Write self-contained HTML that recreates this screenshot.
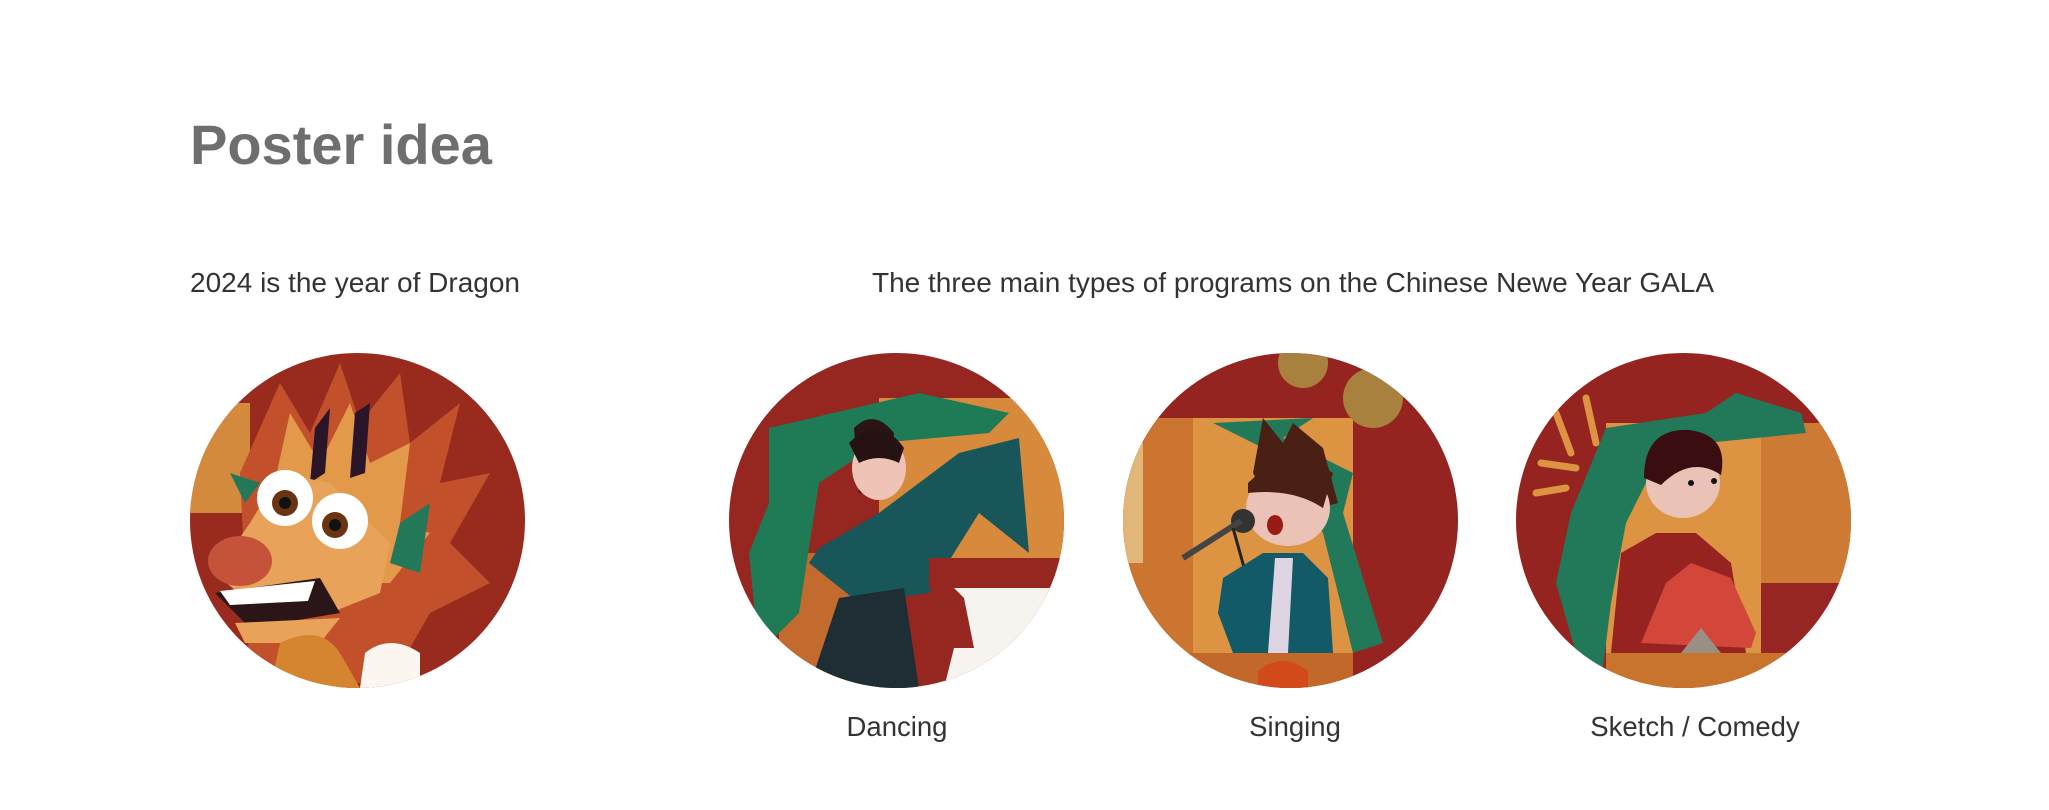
<!DOCTYPE html>
<html><head><meta charset="utf-8"><style>
body{margin:0;width:2049px;height:810px;background:#fff;position:relative;overflow:hidden;font-family:"Liberation Sans",Arial,sans-serif;}
.t{position:absolute;white-space:nowrap}
h1{position:absolute;left:190px;top:112px;margin:0;font-size:56px;font-weight:bold;color:#6e6e6e;}
.s{font-size:28px;color:#333;}
.c{position:absolute;top:353px;width:335px;height:335px;border-radius:50%;overflow:hidden}
.c svg{display:block}
.l{font-size:27.5px;color:#333;top:711px;transform:translateX(-50%)}
</style></head><body>
<h1>Poster idea</h1>
<div class="t s" style="left:190px;top:267px">2024 is the year of Dragon</div>
<div class="t s" style="left:872px;top:267px">The three main types of programs on the Chinese Newe Year GALA</div>

<div class="c" style="left:190px"><svg width="335" height="335" viewBox="0 0 335 335">
<rect width="335" height="335" fill="#982a1e"/>
<rect x="0" y="50" width="60" height="110" fill="#d48a3c"/>
<path d="M60 330 L50 120 L90 30 L120 80 L150 10 L170 70 L210 20 L220 90 L270 50 L250 130 L300 120 L260 190 L300 230 L240 260 L200 330Z" fill="#c1502b"/>
<path d="M80 150 L100 60 L130 110 L160 50 L180 110 L220 90 L210 170 L240 180 L200 230 L150 230Z" fill="#e29a4a"/>
<path d="M125 75 L140 55 L135 120 L120 130Z M165 60 L180 50 L175 120 L160 125Z" fill="#2a1628"/>
<path d="M60 170 L90 120 L140 130 L200 190 L190 240 L140 260 L60 250 L25 220Z" fill="#e8a259"/>
<path d="M70 130 L40 120 L55 150 Z M210 170 L240 150 L230 220 L200 210Z" fill="#24785a"/>
<circle cx="95" cy="145" r="28" fill="#fff"/><circle cx="150" cy="168" r="28" fill="#fff"/>
<circle cx="95" cy="150" r="13" fill="#6a3412"/><circle cx="145" cy="172" r="13" fill="#6a3412"/>
<circle cx="95" cy="150" r="6" fill="#111"/><circle cx="145" cy="172" r="6" fill="#111"/>
<ellipse cx="50" cy="208" rx="32" ry="25" fill="#c4533a"/>
<path d="M25 240 L130 225 L150 260 L60 275 Z" fill="#2a1616"/>
<path d="M30 238 L125 228 L118 248 L40 252Z" fill="#fff"/>
<path d="M45 270 L150 265 L130 290 L55 290Z" fill="#e8a259"/>
<path d="M90 290 Q130 270 150 300 L170 335 L80 335Z" fill="#d5842f"/>
<path d="M175 300 Q200 280 230 300 L230 335 L170 335Z" fill="#fbf6f0"/>
</svg></div>

<div class="c" style="left:729px"><svg width="335" height="335" viewBox="0 0 335 335">
<rect width="335" height="335" fill="#962620"/>
<rect x="150" y="45" width="185" height="160" fill="#d88a3c"/>
<rect x="50" y="200" width="100" height="135" fill="#c36a2e"/>
<path d="M40 75 L190 40 L280 60 L260 80 L150 90 L90 130 L70 260 L30 300 L20 200 L40 150Z" fill="#1f7a56"/>
<path d="M125 75 q20 -20 40 5 l-5 60 h-30Z" fill="#2a1414"/>
<ellipse cx="150" cy="115" rx="27" ry="32" fill="#efc4b6"/>
<path d="M120 90 q30 -30 55 5 l-5 15 q-20 -10 -40 0 z" fill="#261212"/>
<path d="M90 195 L150 160 L230 100 L290 85 L300 200 L250 160 L200 240 L130 250 L80 210Z" fill="#18565a"/>
<path d="M110 245 L175 235 L190 335 L80 335 Z" fill="#1f2e34"/>
<path d="M220 230 h115 v105 h-120 l10 -40 h20 l-10 -50z" fill="#f7f3ee"/>
<rect x="200" y="205" width="135" height="30" fill="#962620"/>
</svg></div>

<div class="c" style="left:1123px"><svg width="335" height="335" viewBox="0 0 335 335">
<rect width="335" height="335" fill="#952320"/>
<rect x="0" y="65" width="70" height="240" fill="#cb7530"/>
<rect x="0" y="90" width="20" height="120" fill="#e1b67a"/>
<rect x="70" y="65" width="160" height="240" fill="#dc9443"/>
<rect x="0" y="300" width="230" height="35" fill="#c2682a"/>
<circle cx="180" cy="10" r="25" fill="#a9813e"/>
<circle cx="250" cy="45" r="30" fill="#a9813e"/>
<path d="M90 70 L190 65 L160 85 L230 120 L220 160 L260 290 L230 300 L200 180 L150 100Z" fill="#22795a"/>
<path d="M130 120 L140 65 L160 90 L170 70 L200 95 L215 150 L180 160 L140 140Z" fill="#4a2014"/>
<ellipse cx="165" cy="155" rx="42" ry="38" fill="#ebc2b6"/>
<path d="M125 130 q40 -40 85 -10 l-10 35 q-30 -20 -75 -15z" fill="#4a2014"/>
<ellipse cx="152" cy="172" rx="8" ry="10" fill="#9a1a14"/>
<circle cx="120" cy="168" r="12" fill="#333"/>
<path d="M60 205 L118 168" stroke="#444" stroke-width="6"/>
<path d="M110 175 L145 300" stroke="#222" stroke-width="3"/>
<path d="M100 225 L140 200 L180 200 L205 225 L210 300 L110 300 L95 260Z" fill="#135a68"/>
<path d="M152 205 L170 205 L165 300 L145 300Z" fill="#ddd4e4"/>
<path d="M135 318 q25 -20 50 0 v20 h-50z" fill="#d24a1a"/>
</svg></div>

<div class="c" style="left:1516px"><svg width="335" height="335" viewBox="0 0 335 335">
<rect width="335" height="335" fill="#952320"/>
<rect x="90" y="70" width="245" height="235" fill="#dc9443"/>
<rect x="245" y="70" width="90" height="160" fill="#cc7a34"/>
<rect x="245" y="230" width="90" height="75" fill="#962523"/>
<rect x="90" y="300" width="245" height="35" fill="#c8742c"/>
<path d="M90 75 L190 60 L220 40 L285 60 L290 80 L190 90 L140 110 L110 170 L95 250 L85 330 L60 300 L40 230 L55 160Z" fill="#22795a"/>
<path d="M40 60 L55 100 M25 110 L60 115 M20 140 L50 135 M70 45 L80 90" stroke="#dc9443" stroke-width="7" stroke-linecap="round"/>
<path d="M105 200 L140 180 L180 180 L215 210 L230 300 L95 300Z" fill="#962320"/>
<ellipse cx="167" cy="130" rx="37" ry="35" fill="#ebc2b6"/>
<path d="M128 125 q0 -50 45 -48 q40 5 32 45 q-30 -20 -60 10z" fill="#3a0e10"/>
<circle cx="175" cy="130" r="3" fill="#111"/><circle cx="198" cy="128" r="3" fill="#111"/>
<path d="M125 290 L150 230 L175 210 L215 225 L240 280 L235 295 Z" fill="#d2473a"/>
<path d="M165 300 l20 -25 l20 25z" fill="#9a8f84"/>
</svg></div>

<div class="t l" style="left:897px">Dancing</div>
<div class="t l" style="left:1295px">Singing</div>
<div class="t l" style="left:1695px">Sketch / Comedy</div>
</body></html>
